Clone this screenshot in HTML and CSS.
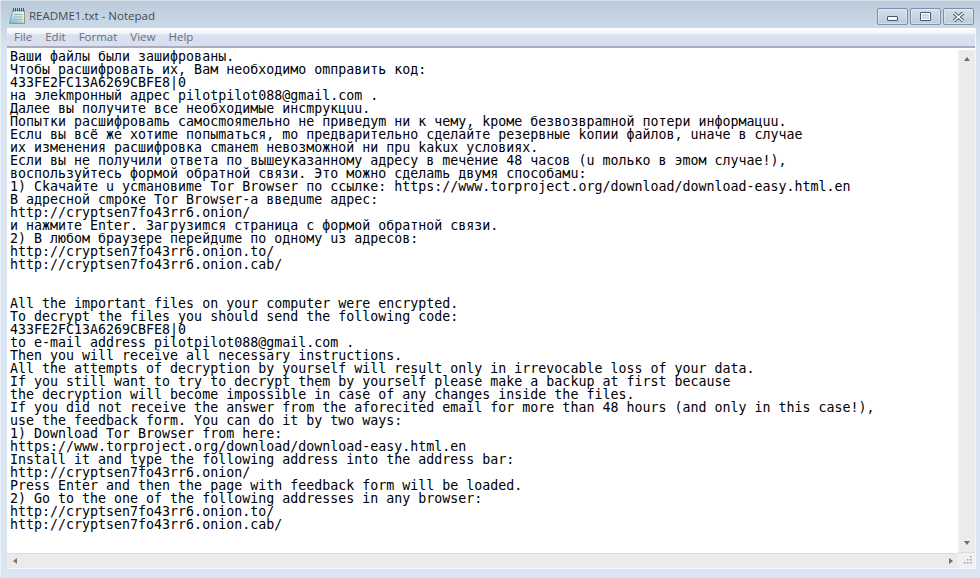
FILE: index.html
```html
<!DOCTYPE html>
<html lang="ru">
<head>
<meta charset="utf-8">
<title>README1.txt - Notepad</title>
<link rel="stylesheet" href="styles.css">
</head>
<body>
<div class="window">
  <header class="titlebar">
    <svg class="app-icon" width="17" height="17" viewBox="0 0 17 17">
      <defs>
        <linearGradient id="pad" x1="0" y1="1" x2="1" y2="0">
          <stop offset="0" stop-color="#6fb9c6"/>
          <stop offset=".45" stop-color="#c4e6ea"/>
          <stop offset="1" stop-color="#e6f4f4"/>
        </linearGradient>
      </defs>
      <path d="M3.500 2.500H15.500V15.500H.5z" fill="url(#pad)" stroke="#7f9aa3"/>
      <path d="M15.500 2.500V15.500H14" fill="none" stroke="#a39676"/>
      <path d="M5 6.500h8.500M4.500 9h9M4 11.500h9.500M3.500 14h10" stroke="#8fb0ba"/>
      <path d="M4.500 0v3.500M6.500 0v3.500M8.500 0v3.500M10.500 0v3.500M12.500 0v3.500M14.500 0v3.500" stroke="#4b5560"/>
    </svg>
    <span class="title">README1.txt - Notepad</span>
    <div class="controls">
      <div class="ctl"><span class="g-min"></span></div>
      <div class="ctl"><span class="g-max"></span></div>
      <div class="ctl">
        <svg width="13" height="10" viewBox="0 0 13 10"><path d="M2 1l9 8M11 1l-9 8" stroke="#4a5568" stroke-width="3.400"/><path d="M2 1l9 8M11 1l-9 8" stroke="#fff" stroke-width="1.600"/></svg>
      </div>
    </div>
  </header>
  <div class="client">
    <nav class="menu">
      <span>File</span><span>Edit</span><span>Format</span><span>View</span><span>Help</span>
    </nav>
    <div class="edit">
<pre class="text">Ваши файлы были зашифрованы.
Чтобы расшифровать их, Вам необходимо omправить код:
433FE2FC13A6269CBFE8|0
на элekmронный адрес pilotpilot088@gmail.com .
Далее вы получите все необходимые инсmрукцuu.
Попытки расшифроваmь самосmояmельно не приведуm ни к чему, kроме безвозвраmной потери информацuu.
Еслu вы всё же хотиmе попыmаться, mо предварительно сделайте резервные kопии файлов, uначе в случае
их изменения расшифровка сmанеm невозможной ни прu kakuх условиях.
Если вы не получили ответа по вышеуказанному адресу в mечение 48 часов (u mолько в эmом случае!),
воспользуйтесь формой обратной связи. Это можно сделаmь двумя способамu:
1) Ckачайте u усmановиmе Tor Browser по ссылке: https://www.torproject.org/download/download-easy.html.en
В адресной сmроке Tor Browser-а введume адрес:
http://cryptsen7fo43rr6.onion/
и нажмите Enter. Загрузиmся страница с формой обратной связи.
2) В любом браузере перейдume по одному uз адресов:
http://cryptsen7fo43rr6.onion.to/
http://cryptsen7fo43rr6.onion.cab/


All the important files on your computer were encrypted.
To decrypt the files you should send the following code:
433FE2FC13A6269CBFE8|0
to e-mail address pilotpilot088@gmail.com .
Then you will receive all necessary instructions.
All the attempts of decryption by yourself will result only in irrevocable loss of your data.
If you still want to try to decrypt them by yourself please make a backup at first because
the decryption will become impossible in case of any changes inside the files.
If you did not receive the answer from the aforecited email for more than 48 hours (and only in this case!),
use the feedback form. You can do it by two ways:
1) Download Tor Browser from here:
https://www.torproject.org/download/download-easy.html.en
Install it and type the following address into the address bar:
http://cryptsen7fo43rr6.onion/
Press Enter and then the page with feedback form will be loaded.
2) Go to the one of the following addresses in any browser:
http://cryptsen7fo43rr6.onion.to/
http://cryptsen7fo43rr6.onion.cab/</pre>
      <div class="vscroll">
        <span class="arrow up"></span>
        <span class="arrow down"></span>
      </div>
    </div>
    <div class="hrow">
      <div class="hscroll">
        <span class="arrow left"></span>
        <span class="arrow right"></span>
      </div>
      <div class="grip">
        <svg width="12" height="12" viewBox="0 0 12 12"><path d="M9 1h1.500v1.500H9zM6 4h1.500v1.500H6zM9 4h1.500v1.500H9zM3 7h1.500v1.500H3zM6 7h1.500v1.500H6zM9 7h1.500v1.500H9z" fill="#9aa0a6"/></svg>
      </div>
    </div>
  </div>
</div>
</body>
</html>
```
FILE: styles.css
```css
* { box-sizing: border-box; }
html, body { margin: 0; height: 100%; overflow: hidden; background: #dbe6f3; }
.window {
  width: 980px;
  height: 578px;
  display: flex;
  flex-direction: column;
  background: linear-gradient(#b7c8d8 0, #c3d3e1 15px, #d8e4f1 50px, #dbe6f3 100%);
  box-shadow: inset 1px 1px 0 rgba(255,255,255,.45);
  overflow: hidden;
}
.titlebar {
  height: 28px;
  flex: none;
  display: flex;
  align-items: center;
  padding: 4px 5px 0 9px;
}
.app-icon { margin-right: 3px; flex: none; }
.title {
  font: 11.500px/16px "Open Sans", "Noto Sans", sans-serif;
  color: #444a52;
}
.controls {
  margin-left: auto;
  display: flex;
  gap: 2px;
  align-self: flex-start;
  margin-top: 4px;
  margin-right: 1px;
}
.ctl {
  width: 31px;
  height: 17px;
  border: 1px solid #7f90a6;
  border-radius: 2px;
  background: linear-gradient(#d3dfea, #bccbdb);
  box-shadow: inset 0 0 0 1px rgba(255,255,255,.35);
  display: flex;
  align-items: center;
  justify-content: center;
}
.g-min {
  width: 11px;
  height: 5px;
  margin-top: 4px;
  background: #f4f6f8;
  border: 1px solid #4a5568;
  border-radius: 1px;
}
.g-max {
  width: 11px;
  height: 9px;
  background: #dfe5ec;
  border: 1px solid #4a5568;
  border-radius: 1px;
  display: block;
  box-shadow: inset 0 0 0 1px #fff, inset 0 0 0 3px #cfd6de;
}
.client {
  flex: 1;
  min-height: 0;
  margin: 0 4px 9px 7px;
  background: #fff;
  display: flex;
  flex-direction: column;
  border: 0 solid #f4f6f9;
  border-width: 0 1px 1px 0;
}
.menu {
  height: 20px;
  flex: none;
  display: flex;
  gap: 13px;
  padding: 0 0 0 7px;
  align-items: center;
  font: 11.500px/16px "Open Sans", "Noto Sans", sans-serif;
  color: #66717f;
  background: linear-gradient(#ffffff 0, #f2f5fb 5px, #d9e0f0 7px, #d9dfef 100%);
  border-bottom: 2px solid #a9adbd;
}
.edit {
  flex: 1;
  min-height: 0;
  display: flex;
  padding-top: 2px;
}
.text {
  flex: 1;
  margin: 0;
  padding: 0 0 0 3px;
  overflow: hidden;
  font: 13.300px/13px "DejaVu Sans Mono", "Liberation Mono", monospace;
  color: #000;
  background: #fff;
}
.vscroll {
  width: 17px;
  flex: none;
  background: #ebebeb;
  border-left: 1px solid #f4f4f4;
  border-bottom: 1px solid #dcdcdc;
  display: flex;
  flex-direction: column;
  justify-content: space-between;
  align-items: center;
  padding: 7px 0 7px;
}
.hrow { height: 15px; flex: none; display: flex; }
.hscroll {
  flex: 1;
  background: #ebebeb;
  border-top: 1px solid #dcdcdc;
  display: flex;
  justify-content: space-between;
  align-items: center;
  padding: 0 5px 0 6px;
}
.grip {
  width: 17px;
  background: #f0f0f0;
  display: flex;
  align-items: flex-end;
  justify-content: flex-end;
  padding: 0 2px 1px 0;
}
.arrow { width: 0; height: 0; display: block; border-style: solid; border-color: transparent; }
.up { border-width: 0 3.500px 4px; border-bottom-color: #6e6e6e; }
.down { border-width: 4px 3.500px 0; border-top-color: #6e6e6e; }
.left { border-width: 3.500px 4px 3.500px 0; border-right-color: #7a7a7a; }
.right { border-width: 3.500px 0 3.500px 4px; border-left-color: #6e6e6e; }
```
